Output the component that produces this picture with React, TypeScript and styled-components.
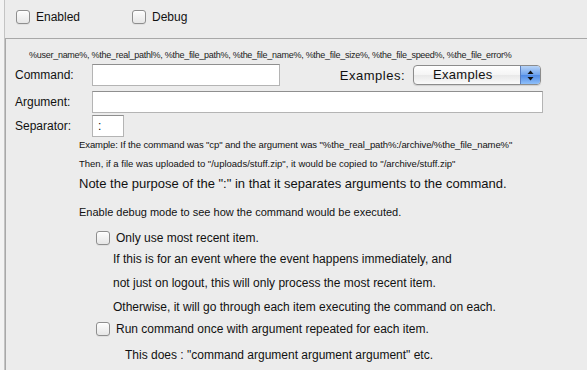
import styled, { createGlobalStyle } from "styled-components";

const GlobalStyle = createGlobalStyle`
  html, body {
    margin: 0;
    padding: 0;
    background: #f3f3f3;
  }
  body {
    font-family: "Liberation Sans", Arial, sans-serif;
    color: #111;
  }
`;

const Window = styled.div`
  margin-left: 4px;
  border-left: 1px solid #c4c4c4;
  background: #ececec;
  width: 582px;
  height: 370px;
  overflow: hidden;
`;

const TopBar = styled.div`
  box-sizing: border-box;
  height: 38px;
  padding: 0 0 4px 11px;
  display: flex;
  align-items: center;
  gap: 23px;
`;

const CheckLabel = styled.label<{ $w?: number }>`
  display: flex;
  align-items: center;
  gap: 6px;
  font-size: 12px;
  width: ${({ $w }) => ($w ? `${$w}px` : "auto")};
`;

const Box = styled.span`
  display: inline-block;
  width: 12px;
  height: 12px;
  border: 1px solid #8e8e8e;
  border-radius: 3px;
  background: linear-gradient(#fdfdfd, #e6e6e6);
  box-shadow: inset 0 1px 1px rgba(255, 255, 255, 0.9), 0 1px 0 rgba(0, 0, 0, 0.05);
`;

const Group = styled.div`
  border-top: 1px solid #a8a8a8;
  border-left: 1px solid #a8a8a8;
  padding: 7px 0 0 9px;
  height: 340px;
`;

const VarsLine = styled.div`
  height: 18px;
  line-height: 18px;
  font-size: 9px;
  letter-spacing: -0.27px;
  padding-left: 14px;
  color: #222;
  white-space: nowrap;
`;

const Row = styled.div<{ $mt?: number }>`
  display: flex;
  align-items: center;
  height: 22px;
  margin-top: ${({ $mt }) => $mt ?? 0}px;
`;

const Label = styled.div`
  width: 77px;
  font-size: 12px;
`;

const TextInput = styled.div<{ $w: number }>`
  box-sizing: border-box;
  width: ${({ $w }) => $w}px;
  height: 22px;
  background: #fff;
  border: 1px solid #b4b4b4;
  border-top-color: #8f8f8f;
  font-size: 12px;
  line-height: 20px;
  padding-left: 5px;
`;

const ExamplesWrap = styled.div`
  margin-left: auto;
  margin-right: 46px;
  display: flex;
  align-items: center;
  gap: 8px;
  height: 22px;
`;

const ExamplesLabel = styled.span`
  font-size: 13px;
  letter-spacing: 0.5px;
`;

const Select = styled.div`
  box-sizing: border-box;
  width: 128px;
  height: 20px;
  border: 1px solid #8c8c8c;
  border-radius: 4px;
  background: linear-gradient(#ffffff, #f4f4f4 50%, #e8e8e8 51%, #fafafa);
  display: flex;
  overflow: hidden;
  box-shadow: 0 1px 1px rgba(0, 0, 0, 0.12);
`;

const SelectText = styled.span`
  flex: 1;
  font-size: 13px;
  letter-spacing: 0.3px;
  line-height: 18px;
  padding-left: 19px;
`;

const SelectArrows = styled.span`
  width: 19px;
  border-left: 1px solid #5a7fc0;
  background: linear-gradient(#b7d3f7, #6fa3ec 50%, #4f8ae4 51%, #8fc0fa);
  display: flex;
  align-items: center;
  justify-content: center;
`;

const Text = styled.div<{ $h: number; $mt?: number; $pl: number; $size?: number; $ls?: number }>`
  height: ${({ $h }) => $h}px;
  line-height: ${({ $h }) => $h}px;
  margin-top: ${({ $mt }) => $mt ?? 0}px;
  padding-left: ${({ $pl }) => $pl}px;
  font-size: ${({ $size }) => $size ?? 12}px;
  letter-spacing: ${({ $ls }) => $ls ?? 0}px;
  white-space: nowrap;
`;

const OptionRow = styled.div<{ $h: number; $mt?: number }>`
  height: ${({ $h }) => $h}px;
  margin-top: ${({ $mt }) => $mt ?? 0}px;
  padding-left: 81px;
  display: flex;
  align-items: center;
`;

export default function App() {
  return (
    <>
      <GlobalStyle />
      <Window>
        <TopBar>
          <CheckLabel $w={93}>
            <Box /> Enabled
          </CheckLabel>
          <CheckLabel>
            <Box /> Debug
          </CheckLabel>
        </TopBar>
        <Group>
          <VarsLine>
            %user_name%, %the_real_pathl%, %the_file_path%, %the_file_name%, %the_file_size%,
            %the_file_speed%, %the_file_error%
          </VarsLine>
          <Row>
            <Label>Command:</Label>
            <TextInput $w={188} />
            <ExamplesWrap>
              <ExamplesLabel>Examples:</ExamplesLabel>
              <Select>
                <SelectText>Examples</SelectText>
                <SelectArrows>
                  <svg width="7" height="11" viewBox="0 0 7 11">
                    <path d="M3.5 0.5 L6.5 4 L0.5 4 Z" fill="#111" />
                    <path d="M3.5 10.5 L6.5 7 L0.5 7 Z" fill="#111" />
                  </svg>
                </SelectArrows>
              </Select>
            </ExamplesWrap>
          </Row>
          <Row $mt={5}>
            <Label>Argument:</Label>
            <TextInput $w={451} />
          </Row>
          <Row $mt={2}>
            <Label>Separator:</Label>
            <TextInput $w={32}>:</TextInput>
          </Row>
          <Text $h={16} $pl={64} $size={9.5} $ls={-0.1}>
            Example: If the command was "cp" and the argument was
            "%the_real_path%:/archive/%the_file_name%"
          </Text>
          <Text $h={22} $pl={64} $size={9.5}>
            Then, if a file was uploaded to "/uploads/stuff.zip", it would be copied to
            "/archive/stuff.zip"
          </Text>
          <Text $h={18} $pl={64} $size={13}>
            Note the purpose of the ":" in that it separates arguments to the command.
          </Text>
          <Text $h={20} $mt={9} $pl={64} $size={11}>
            Enable debug mode to see how the command would be executed.
          </Text>
          <OptionRow $h={18} $mt={7}>
            <CheckLabel>
              <Box /> Only use most recent item.
            </CheckLabel>
          </OptionRow>
          <Text $h={24} $pl={98}>
            If this is for an event where the event happens immediately, and
          </Text>
          <Text $h={24} $pl={98}>
            not just on logout, this will only process the most recent item.
          </Text>
          <Text $h={24} $pl={98}>
            Otherwise, it will go through each item executing the command on each.
          </Text>
          <OptionRow $h={20}>
            <CheckLabel>
              <Box /> Run command once with argument repeated for each item.
            </CheckLabel>
          </OptionRow>
          <Text $h={20} $mt={6} $pl={110}>
            This does : "command argument argument argument" etc.
          </Text>
        </Group>
      </Window>
    </>
  );
}
